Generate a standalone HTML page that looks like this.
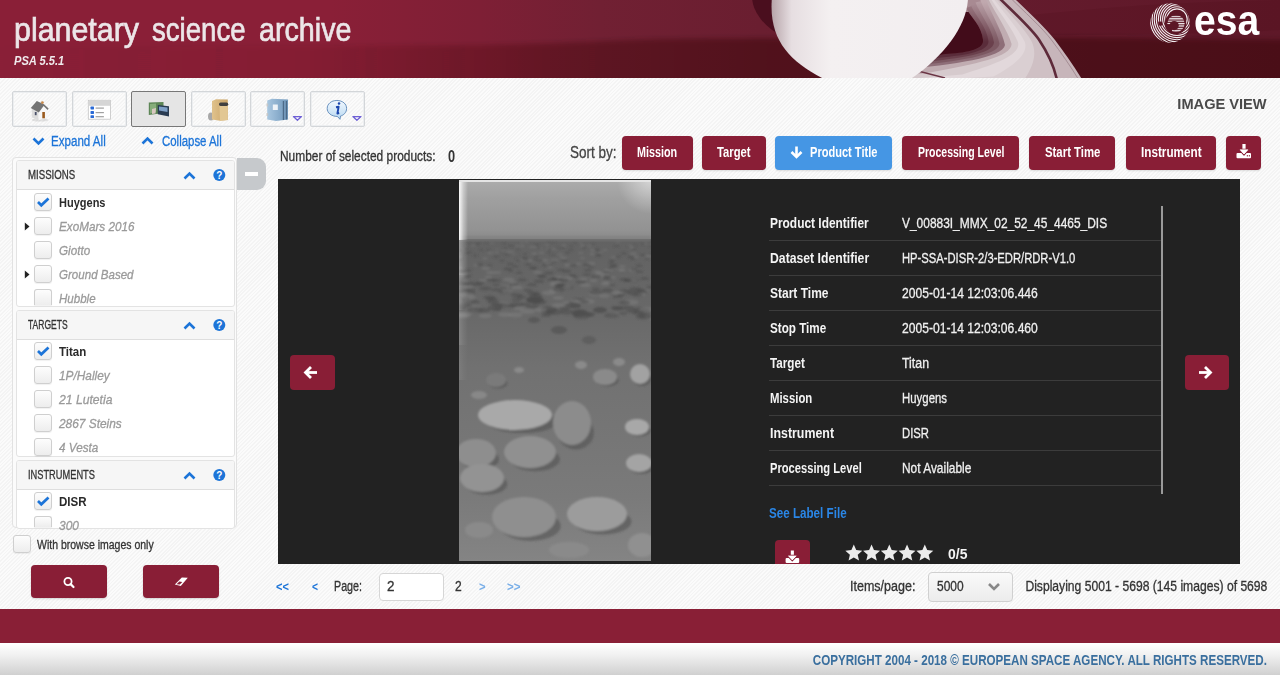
<!DOCTYPE html>
<html><head><meta charset="utf-8"><title>PSA</title><style>
html,body{margin:0;padding:0;}
body{width:1280px;height:675px;overflow:hidden;position:relative;font-family:"Liberation Sans",sans-serif;
 background:#f6f6f6 repeating-linear-gradient(135deg,#fbfbfb 0px,#fbfbfb 1.3px,#f4f4f4 1.3px,#f4f4f4 2.6px);}
.t{position:absolute;white-space:nowrap;line-height:normal;}
.t.n{-webkit-text-stroke:0.3px currentColor;}
.a{position:absolute;}
#hdr{position:absolute;left:0;top:0;width:1280px;height:78px;overflow:hidden;
 background:linear-gradient(90deg,#8a1f37 0px,#8a1f37 330px,#7e1f35 480px,#712033 600px,#6a1e30 760px,#641b2d 1000px,#5e1828 1280px);}
.tb{position:absolute;top:91px;width:53px;height:34px;border:1px solid #d3d6d9;border-radius:2px;box-shadow:inset 0 0 0 1px #eceef0;}
.tb.on{background:#e5e5e5;border-color:#777;box-shadow:none;}
.btn{position:absolute;top:136px;height:34px;background:#891e36;border-radius:4px;box-shadow:0 1px 2px rgba(0,0,0,.12);}
.btn.blue{background:#4596e4;}
.sec{position:absolute;left:16px;width:217px;background:#fff;border:1px solid #e3e3e3;border-radius:3px;overflow:hidden;}
.sech{position:absolute;left:0;top:0;width:217px;height:28px;background:#f6f6f6;border-bottom:1px solid #dedede;}
.cb{position:absolute;left:34px;width:16px;height:16px;border:1px solid #cfcfcf;border-radius:3px;background:linear-gradient(#fdfdfd,#ededed);box-shadow:0 1px 1px rgba(0,0,0,.06);}
.sep{position:absolute;left:769px;width:393px;height:1px;background:#3c3c3c;}

</style></head><body>
<div id="hdr">
<svg width="1280" height="78" style="position:absolute;left:0;top:0">
 <defs>
  <linearGradient id="land" x1="0" y1="0" x2="1" y2="0">
   <stop offset="0" stop-color="#3a000c" stop-opacity="0.0"/>
   <stop offset="0.25" stop-color="#3a000c" stop-opacity="0.08"/>
   <stop offset="0.42" stop-color="#3a000c" stop-opacity="0.3"/>
   <stop offset="0.6" stop-color="#300008" stop-opacity="0.42"/>
   <stop offset="1" stop-color="#2a0008" stop-opacity="0.42"/>
  </linearGradient>
  <linearGradient id="disc" x1="0" y1="0" x2="0.3" y2="1">
   <stop offset="0" stop-color="#f7f3f4"/>
   <stop offset="0.6" stop-color="#f1ebed"/>
   <stop offset="1" stop-color="#ddd0d4"/>
  </linearGradient>
  <linearGradient id="gap" x1="0" y1="0" x2="1" y2="1">
   <stop offset="0" stop-color="#5a1a2a"/>
   <stop offset="1" stop-color="#3e0c18"/>
  </linearGradient>
 </defs>
 <filter id="hblur" x="-5%" y="-50%" width="110%" height="200%"><feGaussianBlur stdDeviation="1.5 2.5"/></filter>
 <path d="M-20,47 C150,46 300,46 470,45 C560,44 620,40 660,39 C750,38 900,38 1000,37 C1100,37 1180,39 1300,40 L1300,90 L-20,90 Z" fill="url(#land)" filter="url(#hblur)"/>
 <path d="M1000,18 C1080,10 1150,2 1280,0 L1280,30 C1180,36 1080,34 1000,36 Z" fill="#3a000c" fill-opacity="0.10"/>
 <g id="rings"><ellipse cx="866" cy="-4" rx="114" ry="60" fill="#4a0e1e"/>
<path d="M930,-3 L966,-3 L966.0,8.0 C970.0,16.0 982.0,26.0 983.0,40.0 C984.0,50.0 965.0,53.0 945.0,54.0 L900,60 Z" fill="#420c1a"/>
<path d="M962,-3 L1000,-3 L990,12 L962,12 Z" fill="#a88a92"/>
<defs><linearGradient id="cg0" x1="0" y1="2" x2="0" y2="42" gradientUnits="userSpaceOnUse"><stop offset="0" stop-color="#a08088"/><stop offset="1" stop-color="#5a2c3a"/></linearGradient><linearGradient id="cg1" x1="0" y1="2" x2="0" y2="42" gradientUnits="userSpaceOnUse"><stop offset="0" stop-color="#ab8e96"/><stop offset="1" stop-color="#6a404c"/></linearGradient><linearGradient id="cg2" x1="0" y1="2" x2="0" y2="42" gradientUnits="userSpaceOnUse"><stop offset="0" stop-color="#b69ca3"/><stop offset="1" stop-color="#7c5862"/></linearGradient><linearGradient id="cg3" x1="0" y1="2" x2="0" y2="42" gradientUnits="userSpaceOnUse"><stop offset="0" stop-color="#c0a8ae"/><stop offset="1" stop-color="#8e6e78"/></linearGradient></defs>
<path d="M966.0,8.0 C970.0,16.0 982.0,26.0 983.0,40.0 C984.0,50.0 965.0,53.0 945.0,54.0 L860.0,70.0 L850.0,84.0 L1060.0,84.0 L1056.0,81.0 C1053.0,66.0 1046.0,52.0 1038.0,40.0 C1030.0,28.0 1011.0,11.0 997.0,-3.0 Z" fill="url(#cg0)"/>
<path d="M970.8,5.2 C975.0,15.0 987.0,27.0 988.5,41.2 C988.8,52.0 962.5,55.8 933.8,58.0 L860.0,70.0 L850.0,84.0 L1060.0,84.0 L1056.0,81.0 C1053.0,66.0 1046.0,52.0 1038.0,40.0 C1030.0,28.0 1011.0,11.0 997.0,-3.0 Z" fill="url(#cg1)"/>
<path d="M975.5,2.5 C980.0,14.0 992.0,28.0 994.0,42.5 C993.5,54.0 960.0,58.5 922.5,62.0 L860.0,70.0 L850.0,84.0 L1060.0,84.0 L1056.0,81.0 C1053.0,66.0 1046.0,52.0 1038.0,40.0 C1030.0,28.0 1011.0,11.0 997.0,-3.0 Z" fill="url(#cg2)"/>
<path d="M980.2,-0.2 C985.0,13.0 997.0,29.0 999.5,43.8 C998.2,56.0 957.5,61.2 911.2,66.0 L860.0,70.0 L850.0,84.0 L1060.0,84.0 L1056.0,81.0 C1053.0,66.0 1046.0,52.0 1038.0,40.0 C1030.0,28.0 1011.0,11.0 997.0,-3.0 Z" fill="url(#cg3)"/>
<path d="M985.0,-3.0 C990.0,12.0 1002.0,30.0 1005.0,45.0 C1003.0,58.0 955.0,64.0 900.0,70.0 L850.0,84.0 L1060.0,84.0 L1056.0,81.0 C1053.0,66.0 1046.0,52.0 1038.0,40.0 C1030.0,28.0 1011.0,11.0 997.0,-3.0 Z" fill="#c0acb1"/>
<path d="M987.4,-3.0 C994.2,11.8 1007.6,29.6 1011.6,44.0 C1011.6,56.8 974.6,64.4 931.2,72.2 L850.0,84.0 L1060.0,84.0 L1056.0,81.0 C1053.0,66.0 1046.0,52.0 1038.0,40.0 C1030.0,28.0 1011.0,11.0 997.0,-3.0 Z" fill="#d6cacd"/>
<path d="M989.8,-3.0 C998.4,11.6 1013.2,29.2 1018.2,43.0 C1020.2,55.6 994.2,64.8 962.4,74.4 L850.0,84.0 L1060.0,84.0 L1056.0,81.0 C1053.0,66.0 1046.0,52.0 1038.0,40.0 C1030.0,28.0 1011.0,11.0 997.0,-3.0 Z" fill="#e2d8db"/>
<path d="M992.2,-3.0 C1002.6,11.4 1018.8,28.8 1024.8,42.0 C1028.8,54.4 1013.8,65.2 993.6,76.6 L850.0,84.0 L1060.0,84.0 L1056.0,81.0 C1053.0,66.0 1046.0,52.0 1038.0,40.0 C1030.0,28.0 1011.0,11.0 997.0,-3.0 Z" fill="#dacfd2"/>
<path d="M994.6,-3.0 C1006.8,11.2 1024.4,28.4 1031.4,41.0 C1037.4,53.2 1033.4,65.6 1024.8,78.8 L850.0,84.0 L1060.0,84.0 L1056.0,81.0 C1053.0,66.0 1046.0,52.0 1038.0,40.0 C1030.0,28.0 1011.0,11.0 997.0,-3.0 Z" fill="#cfc0c4"/>
<path d="M997.0,-3.0 C1011.0,11.0 1030.0,28.0 1038.0,40.0 C1046.0,52.0 1053.0,66.0 1056.0,81.0  L1083.0,81.0 C1074.0,66.0 1064.0,52.0 1055.0,40.0 C1046.0,28.0 1027.0,11.0 1013.0,-3.0 Z" fill="#c7b5ba"/>
<path d="M998.2,-3.0 C1012.2,11.0 1031.2,28.0 1039.2,40.0 C1047.2,52.0 1054.2,66.0 1057.2,81.0" fill="none" stroke="#5e2a3a" stroke-width="2.6"/>
<path d="M1009.5,-3.0 C1023.5,11.0 1042.5,28.0 1051.5,40.0 C1060.5,52.0 1070.5,66.0 1079.5,81.0" fill="none" stroke="#a08890" stroke-width="0.9"/>
<path d="M918,71 L945,78" fill="none" stroke="#6a3444" stroke-width="1.4"/>
<defs><linearGradient id="disc2" x1="772" y1="0" x2="968" y2="0" gradientUnits="userSpaceOnUse"><stop offset="0" stop-color="#b8a6ab"/><stop offset="0.1" stop-color="#e6dee1"/><stop offset="0.3" stop-color="#f4f0f1"/><stop offset="1" stop-color="#f2eef0"/></linearGradient></defs>
<path d="M772,-3 C768,40 790,62 826,80 L909,80 C943,58 968,25 968,-3 Z" fill="url(#disc2)"/></g>
   <g id="esa" transform="translate(1170,23)"><defs><mask id="esamask"><rect x="-30" y="-30" width="60" height="60" fill="#000"/><circle cx="0" cy="0" r="19.8" fill="#fff"/><circle cx="5.5" cy="0.5" r="10.8" fill="#000"/></mask><mask id="emask"><rect x="-30" y="-30" width="60" height="60" fill="#000"/><circle cx="6" cy="0.5" r="8.6" fill="#fff"/><circle cx="4.2" cy="2.6" r="4.6" fill="#000"/><rect x="-6" y="1.2" width="8" height="12" fill="#000"/></mask><pattern id="esastr2" width="2.4" height="2.4" patternUnits="userSpaceOnUse"><rect x="0" y="0" width="2.4" height="1.25" fill="#f3eef0"/></pattern></defs>
<g mask="url(#esamask)" fill="none" stroke="#f3eef0" stroke-width="1.15">
<circle cx="7" cy="-4" r="10.20"/>
<circle cx="7" cy="-4" r="12.30"/>
<circle cx="7" cy="-4" r="14.40"/>
<circle cx="7" cy="-4" r="16.50"/>
<circle cx="7" cy="-4" r="18.60"/>
<circle cx="7" cy="-4" r="20.70"/>
<circle cx="7" cy="-4" r="22.80"/>
<circle cx="7" cy="-4" r="24.90"/>
<circle cx="7" cy="-4" r="27.00"/>
<circle cx="7" cy="-4" r="29.10"/>
</g>
<rect x="-4" y="-10" width="22" height="22" fill="url(#esastr2)" mask="url(#emask)"/>
<rect x="-11.8" y="-1.4" width="4" height="4" fill="#5e1526"/></g>
</svg>
</div>

<!-- toolbar -->
<div class="tb" style="left:12px"></div>
<div class="tb" style="left:72px"></div>
<div class="tb on" style="left:131px"></div>
<div class="tb" style="left:191px"></div>
<div class="tb" style="left:250px"></div>
<div class="tb" style="left:310px"></div>
<svg class="a" style="left:0;top:85px" width="380" height="45" id="icons"><g transform="translate(0,-85)">
<defs><linearGradient id="bubg" x1="0" y1="0" x2="0" y2="1"><stop offset="0" stop-color="#f2f8fe"/><stop offset="1" stop-color="#b9d9f2"/></linearGradient><linearGradient id="folg" x1="0" y1="0" x2="1" y2="0"><stop offset="0" stop-color="#e0c28c"/><stop offset="1" stop-color="#c9a468"/></linearGradient><linearGradient id="dbg" x1="0" y1="0" x2="1" y2="0"><stop offset="0" stop-color="#a9c7e0"/><stop offset="1" stop-color="#6f97bb"/></linearGradient></defs>
<ellipse cx="40" cy="120" rx="8.5" ry="1.6" fill="#000" fill-opacity="0.10"/>
<path d="M31.8,108.5 L38.6,111.5 L38.6,120.2 L31.8,117.2 Z" fill="#dcdcdc"/>
<path d="M38.6,111.5 L43.6,105.5 L47.6,109.5 L47.6,117.5 L38.6,120.2 Z" fill="#f7f7f7"/>
<path d="M30.8,108 L36.8,101 L44,104.2 L48.6,108.6 L47.6,110 L43.6,106 L38.8,112.4 Z" fill="#747474"/>
<circle cx="42.4" cy="102.6" r="1.4" fill="#c8894a"/>
<rect x="42.3" y="112" width="2.6" height="6.3" fill="#9a5a1e"/>
<rect x="34.8" y="112" width="1.8" height="3.2" fill="#4a5068"/>
<rect x="88.3" y="100.3" width="22.2" height="18.9" fill="#fff" stroke="#c4c4c4" stroke-width="0.8"/>
<rect x="88.7" y="100.7" width="21.4" height="5.1" fill="#d6d6d6"/>
<rect x="90.5" y="106.6" width="3.5" height="2.8" rx="0.6" fill="#2a6ad6"/>
<rect x="95.6" y="107.5" width="8.3" height="1.2" fill="#a0a0a0"/>
<rect x="90.5" y="111.1" width="3.5" height="2.8" rx="0.6" fill="#2a6ad6"/>
<rect x="95.6" y="112.0" width="8.3" height="1.2" fill="#a0a0a0"/>
<rect x="90.5" y="115.2" width="3.5" height="2.8" rx="0.6" fill="#2a6ad6"/>
<rect x="95.6" y="116.1" width="8.3" height="1.2" fill="#a0a0a0"/>
<path d="M148.8,102.5 L163.5,102 L163.5,113 L148.8,115 Z" fill="#5d8656"/>
<path d="M150,104 L156,103.5 L156,112 L150,113.5 Z" fill="#86ad7a"/>
<path d="M152,109 L156,108 L155.5,113.5 L152,114 Z" fill="#d8c8c0"/>
<path d="M157.8,105 L169,106.2 L169,116.5 L157.8,114.2 Z" fill="#2a3c52"/>
<path d="M159,106.5 L167.5,107.5 L167.5,112 L159,110.5 Z" fill="#7fa0c6"/>
<ellipse cx="211" cy="116.5" rx="3" ry="4" fill="#a8a8a8"/>
<path d="M212,101 L216,99.3 L227.8,99.5 L227.8,120 L220,120.7 L212,119.5 Z" fill="url(#folg)"/>
<path d="M219.5,106 L227.8,105.5 L227.8,120 L220,120.7 Z" fill="#e2c793"/>
<rect x="219" y="102.6" width="9.2" height="3.3" rx="1.6" fill="#404040"/>
<path d="M267.2,100.5 L272,98.7 L288,99.5 L288,119.5 L276,121.1 L267.2,119.5 Z" fill="url(#dbg)"/>
<rect x="272.8" y="104.5" width="5" height="5.5" fill="#eef3f8"/>
<rect x="282.8" y="101" width="1.3" height="19" fill="#4c6a88"/>
<rect x="285.8" y="101" width="1.3" height="18.5" fill="#4c6a88"/>
<rect x="266.5" y="103.5" width="1.6" height="3" fill="#c8c8c8"/><rect x="266.5" y="113" width="1.6" height="3" fill="#c8c8c8"/>
<path d="M293.4,116.6 L301.5,116.6 L297.4,120.2 Z" fill="none" stroke="#6e60d6" stroke-width="1.3" stroke-linejoin="round"/>
<path d="M352.9,116.6 L361.0,116.6 L356.9,120.2 Z" fill="none" stroke="#6e60d6" stroke-width="1.3" stroke-linejoin="round"/>
<path d="M336.9,100.5 C342.8,100.5 346.6,104 346.6,108.5 C346.6,112.5 343.5,115.3 340.5,116 L340,119.3 L337.5,116.5 C331,116.3 327.2,112.8 327.2,108.5 C327.2,104 331,100.5 336.9,100.5 Z" fill="url(#bubg)" stroke="#5b87b8" stroke-width="0.9"/>
<circle cx="339" cy="103.4" r="1.25" fill="#1b46ae"/>
<path d="M336,107.3 L338.6,106.8 L337.4,113.5 L339.2,113" fill="none" stroke="#1b46ae" stroke-width="1.9" stroke-linejoin="round"/>
</g></svg>

<!-- expand/collapse chevrons -->
<svg class="a" style="left:0;top:130px" width="260" height="20">
 <path d="M33.5,8.5 L38.5,13.5 L43.5,8.5" fill="none" stroke="#1c74d8" stroke-width="2.6"/>
 <path d="M142.5,13.5 L147.5,8.5 L152.5,13.5" fill="none" stroke="#1c74d8" stroke-width="2.6"/>
</svg>

<!-- panel -->
<div class="a" style="left:12px;top:157px;width:223px;height:369px;border:1px solid #e2e2e2;border-radius:4px;background:#fbfbfb;"></div>
<div class="a" style="left:237px;top:158px;width:29px;height:32px;background:#c6c9cc;border-radius:0 9px 9px 0;"></div>
<div class="a" style="left:245px;top:172px;width:13px;height:4px;background:#fff;"></div>
<div id="secs"><div class="sec" style="top:160.4px;height:145.1px">
<div class="sech"></div>
</div>
<svg class="a" style="left:180px;top:168.4px" width="50" height="20">
<path d="M4.5,10.5 L9.5,5.5 L14.5,10.5" fill="none" stroke="#1c74d8" stroke-width="2.6"/>
<circle cx="39.3" cy="7" r="6" fill="#1c74d8"/>
<text x="39.3" y="11.2" font-family="Liberation Sans" font-weight="bold" font-size="10" fill="#fff" text-anchor="middle">?</text>
</svg>
<div class="cb" style="top:193.2px"></div>
<svg class="a" style="left:34px;top:193.2px" width="18" height="18"><path d="M4,9 L7.3,12.3 L14.5,5.5" fill="none" stroke="#1c74d8" stroke-width="2.7"/></svg>
<div class="cb" style="top:217.2px"></div>
<svg class="a" style="left:24px;top:221.6px" width="8" height="12"><path d="M0.8,0.6 L5.5,4.6 L0.8,8.6 Z" fill="#222"/></svg>
<div class="cb" style="top:241.2px"></div>
<div class="cb" style="top:265.2px"></div>
<svg class="a" style="left:24px;top:269.6px" width="8" height="12"><path d="M0.8,0.6 L5.5,4.6 L0.8,8.6 Z" fill="#222"/></svg>
<div class="cb" style="top:289.2px;height:15.3px;border-bottom:none;border-radius:3px 3px 0 0"></div>
<div class="sec" style="top:309.5px;height:145.8px">
<div class="sech"></div>
</div>
<svg class="a" style="left:180px;top:317.5px" width="50" height="20">
<path d="M4.5,10.5 L9.5,5.5 L14.5,10.5" fill="none" stroke="#1c74d8" stroke-width="2.6"/>
<circle cx="39.3" cy="7" r="6" fill="#1c74d8"/>
<text x="39.3" y="11.2" font-family="Liberation Sans" font-weight="bold" font-size="10" fill="#fff" text-anchor="middle">?</text>
</svg>
<div class="cb" style="top:342.3px"></div>
<svg class="a" style="left:34px;top:342.3px" width="18" height="18"><path d="M4,9 L7.3,12.3 L14.5,5.5" fill="none" stroke="#1c74d8" stroke-width="2.7"/></svg>
<div class="cb" style="top:366.3px"></div>
<div class="cb" style="top:390.3px"></div>
<div class="cb" style="top:414.3px"></div>
<div class="cb" style="top:438.3px"></div>
<div class="sec" style="top:459.6px;height:67.4px">
<div class="sech"></div>
</div>
<svg class="a" style="left:180px;top:467.6px" width="50" height="20">
<path d="M4.5,10.5 L9.5,5.5 L14.5,10.5" fill="none" stroke="#1c74d8" stroke-width="2.6"/>
<circle cx="39.3" cy="7" r="6" fill="#1c74d8"/>
<text x="39.3" y="11.2" font-family="Liberation Sans" font-weight="bold" font-size="10" fill="#fff" text-anchor="middle">?</text>
</svg>
<div class="cb" style="top:492.4px"></div>
<svg class="a" style="left:34px;top:492.4px" width="18" height="18"><path d="M4,9 L7.3,12.3 L14.5,5.5" fill="none" stroke="#1c74d8" stroke-width="2.7"/></svg>
<div class="cb" style="top:516.4px;height:9.6px;border-bottom:none;border-radius:3px 3px 0 0"></div></div>

<!-- browse checkbox -->
<div class="cb" style="left:13px;top:535px;"></div>
<div class="a" style="left:31px;top:565px;width:76px;height:33px;background:#891e36;border-radius:4px;box-shadow:0 1px 2px rgba(0,0,0,.15)"></div>
<div class="a" style="left:143px;top:565px;width:76px;height:33px;background:#891e36;border-radius:4px;box-shadow:0 1px 2px rgba(0,0,0,.15)"></div>
<svg class="a" style="left:0;top:560px" width="240" height="45">
 <circle cx="68" cy="21.5" r="3.6" fill="none" stroke="#fff" stroke-width="1.8"/>
 <path d="M70.6,24.1 L73.5,27" stroke="#fff" stroke-width="2.2" stroke-linecap="round"/>
 <path d="M174.8,24.6 L181.8,17.4 L187.8,17.8 L180.8,25.9 Z" fill="#fff"/>
 <path d="M176.6,24.2 L179.3,21.6 L182.3,21.9 L179.8,24.6 Z" fill="#891e36"/>
</svg>

<!-- sort buttons -->
<div class="btn" style="left:621.5px;width:71px"></div>
<div class="btn" style="left:702px;width:63.6px"></div>
<div class="btn blue" style="left:775px;width:117.2px"></div>
<div class="btn" style="left:902px;width:117px"></div>
<div class="btn" style="left:1029.4px;width:86px"></div>
<div class="btn" style="left:1125.6px;width:90.7px"></div>
<div class="btn" style="left:1226.2px;width:35.2px"></div>
<svg class="a" style="left:780px;top:136px" width="490" height="34">
 <path d="M16.5,10.5 L16.5,21" stroke="#fff" stroke-width="2.6"/>
 <path d="M11.5,16 L16.5,21 L21.5,16" fill="none" stroke="#fff" stroke-width="2.6"/>
 <rect x="462.4" y="8" width="3.2" height="7" fill="#fff"/>
 <rect x="456.5" y="17" width="14.5" height="5.2" rx="1" fill="#fff"/>
 <path d="M458.6,13.2 L469.4,13.2 L464,19.2 Z" fill="#fff" stroke="#891e36" stroke-width="1.1" stroke-linejoin="round"/>
 <path d="M459.6,13.6 L468.4,13.6 L464,18.2 Z" fill="#fff"/>
 <rect x="466.8" y="19.2" width="1.2" height="1.2" fill="#891e36"/><rect x="468.8" y="19.2" width="1.2" height="1.2" fill="#891e36"/>
</svg>

<!-- dark container -->
<div class="a" style="left:278px;top:179px;width:962px;height:385px;background:#222;overflow:hidden">
 <svg class="a" style="left:181px;top:1px" width="192" height="381" id="titan"><defs>
<linearGradient id="sky" x1="0" y1="0" x2="0" y2="1"><stop offset="0" stop-color="#acacac"/><stop offset="0.3" stop-color="#a0a0a0"/><stop offset="0.85" stop-color="#929292"/><stop offset="1" stop-color="#868686"/></linearGradient>
<linearGradient id="gnd" x1="0" y1="0" x2="0" y2="1"><stop offset="0" stop-color="#626262"/><stop offset="0.22" stop-color="#686868"/><stop offset="0.4" stop-color="#717171"/><stop offset="0.8" stop-color="#7a7a7a"/><stop offset="1" stop-color="#848484"/></linearGradient>
<linearGradient id="lft" x1="0" y1="0" x2="1" y2="0"><stop offset="0" stop-color="#fff" stop-opacity="0.95"/><stop offset="0.5" stop-color="#fff" stop-opacity="0.4"/><stop offset="1" stop-color="#fff" stop-opacity="0"/></linearGradient>
<filter id="soft" x="-10%" y="-10%" width="120%" height="120%"><feGaussianBlur stdDeviation="0.9"/></filter>
</defs>
<rect x="0" y="0" width="192" height="60" fill="url(#sky)"/>
<rect x="0" y="59" width="192" height="322" fill="url(#gnd)"/>
<g filter="url(#soft)">
<ellipse cx="107.7" cy="91.0" rx="4.7" ry="1.6" fill="#4a4a4a" fill-opacity="0.50"/>
<ellipse cx="113.1" cy="95.3" rx="3.5" ry="1.2" fill="#4a4a4a" fill-opacity="0.50"/>
<ellipse cx="153.4" cy="105.1" rx="3.6" ry="1.2" fill="#4a4a4a" fill-opacity="0.50"/>
<ellipse cx="156.7" cy="66.2" rx="2.4" ry="0.8" fill="#4a4a4a" fill-opacity="0.50"/>
<ellipse cx="187.1" cy="135.4" rx="7.5" ry="2.6" fill="#4a4a4a" fill-opacity="0.50"/>
<ellipse cx="0.9" cy="70.2" rx="2.6" ry="0.9" fill="#4a4a4a" fill-opacity="0.50"/>
<ellipse cx="45.4" cy="72.2" rx="2.3" ry="0.8" fill="#4a4a4a" fill-opacity="0.50"/>
<ellipse cx="163.1" cy="90.0" rx="3.9" ry="1.3" fill="#858585" fill-opacity="0.40"/>
<ellipse cx="127.8" cy="94.6" rx="4.0" ry="1.4" fill="#4a4a4a" fill-opacity="0.50"/>
<ellipse cx="193.2" cy="136.8" rx="8.5" ry="2.9" fill="#858585" fill-opacity="0.40"/>
<ellipse cx="43.0" cy="80.8" rx="3.0" ry="1.0" fill="#4a4a4a" fill-opacity="0.50"/>
<ellipse cx="76.5" cy="116.5" rx="6.8" ry="2.3" fill="#4a4a4a" fill-opacity="0.50"/>
<ellipse cx="164.1" cy="133.2" rx="4.3" ry="1.5" fill="#4a4a4a" fill-opacity="0.50"/>
<ellipse cx="90.1" cy="129.0" rx="8.5" ry="2.9" fill="#4a4a4a" fill-opacity="0.50"/>
<ellipse cx="121.4" cy="65.2" rx="2.3" ry="0.8" fill="#4a4a4a" fill-opacity="0.50"/>
<ellipse cx="63.2" cy="66.0" rx="2.5" ry="0.9" fill="#858585" fill-opacity="0.40"/>
<ellipse cx="46.3" cy="67.8" rx="2.2" ry="0.8" fill="#4a4a4a" fill-opacity="0.50"/>
<ellipse cx="32.8" cy="119.1" rx="5.9" ry="2.0" fill="#4a4a4a" fill-opacity="0.50"/>
<ellipse cx="141.5" cy="72.3" rx="2.4" ry="0.8" fill="#858585" fill-opacity="0.40"/>
<ellipse cx="80.5" cy="67.7" rx="2.3" ry="0.8" fill="#4a4a4a" fill-opacity="0.50"/>
<ellipse cx="155.5" cy="134.4" rx="5.7" ry="2.0" fill="#858585" fill-opacity="0.40"/>
<ellipse cx="75.3" cy="73.6" rx="3.1" ry="1.1" fill="#858585" fill-opacity="0.40"/>
<ellipse cx="191.9" cy="66.8" rx="2.2" ry="0.8" fill="#4a4a4a" fill-opacity="0.50"/>
<ellipse cx="62.5" cy="117.0" rx="4.8" ry="1.7" fill="#4a4a4a" fill-opacity="0.50"/>
<ellipse cx="112.2" cy="66.2" rx="2.2" ry="0.8" fill="#4a4a4a" fill-opacity="0.50"/>
<ellipse cx="86.8" cy="84.9" rx="4.2" ry="1.5" fill="#4a4a4a" fill-opacity="0.50"/>
<ellipse cx="167.8" cy="100.6" rx="3.7" ry="1.3" fill="#4a4a4a" fill-opacity="0.50"/>
<ellipse cx="158.3" cy="128.8" rx="5.2" ry="1.8" fill="#4a4a4a" fill-opacity="0.50"/>
<ellipse cx="182.3" cy="114.2" rx="4.3" ry="1.5" fill="#858585" fill-opacity="0.40"/>
<ellipse cx="116.3" cy="126.5" rx="5.8" ry="2.0" fill="#4a4a4a" fill-opacity="0.50"/>
<ellipse cx="186.7" cy="63.5" rx="2.1" ry="0.7" fill="#858585" fill-opacity="0.40"/>
<ellipse cx="159.4" cy="76.7" rx="3.1" ry="1.1" fill="#4a4a4a" fill-opacity="0.50"/>
<ellipse cx="139.2" cy="71.3" rx="2.3" ry="0.8" fill="#4a4a4a" fill-opacity="0.50"/>
<ellipse cx="165.1" cy="99.4" rx="4.7" ry="1.6" fill="#4a4a4a" fill-opacity="0.50"/>
<ellipse cx="38.0" cy="129.6" rx="4.2" ry="1.5" fill="#4a4a4a" fill-opacity="0.50"/>
<ellipse cx="9.8" cy="90.4" rx="3.2" ry="1.1" fill="#4a4a4a" fill-opacity="0.50"/>
<ellipse cx="23.8" cy="100.4" rx="4.1" ry="1.4" fill="#858585" fill-opacity="0.40"/>
<ellipse cx="126.8" cy="135.2" rx="7.7" ry="2.6" fill="#4a4a4a" fill-opacity="0.50"/>
<ellipse cx="4.9" cy="69.1" rx="2.2" ry="0.8" fill="#858585" fill-opacity="0.40"/>
<ellipse cx="186.7" cy="111.0" rx="3.6" ry="1.2" fill="#858585" fill-opacity="0.40"/>
<ellipse cx="141.2" cy="93.3" rx="3.7" ry="1.3" fill="#858585" fill-opacity="0.40"/>
<ellipse cx="105.0" cy="65.4" rx="2.3" ry="0.8" fill="#858585" fill-opacity="0.40"/>
<ellipse cx="135.9" cy="114.0" rx="6.4" ry="2.2" fill="#858585" fill-opacity="0.40"/>
<ellipse cx="132.3" cy="83.4" rx="4.0" ry="1.4" fill="#858585" fill-opacity="0.40"/>
<ellipse cx="152.9" cy="88.3" rx="4.4" ry="1.5" fill="#4a4a4a" fill-opacity="0.50"/>
<ellipse cx="72.9" cy="104.7" rx="5.0" ry="1.7" fill="#4a4a4a" fill-opacity="0.50"/>
<ellipse cx="123.3" cy="65.6" rx="2.5" ry="0.8" fill="#858585" fill-opacity="0.40"/>
<ellipse cx="74.1" cy="113.3" rx="6.1" ry="2.1" fill="#4a4a4a" fill-opacity="0.50"/>
<ellipse cx="162.3" cy="90.0" rx="3.0" ry="1.0" fill="#858585" fill-opacity="0.40"/>
<ellipse cx="115.9" cy="63.1" rx="2.1" ry="0.7" fill="#4a4a4a" fill-opacity="0.50"/>
<ellipse cx="95.5" cy="110.7" rx="5.5" ry="1.9" fill="#858585" fill-opacity="0.40"/>
<ellipse cx="0.2" cy="76.6" rx="2.8" ry="1.0" fill="#858585" fill-opacity="0.40"/>
<ellipse cx="31.2" cy="73.0" rx="3.1" ry="1.1" fill="#858585" fill-opacity="0.40"/>
<ellipse cx="172.8" cy="90.2" rx="3.5" ry="1.2" fill="#858585" fill-opacity="0.40"/>
<ellipse cx="82.5" cy="72.8" rx="3.0" ry="1.0" fill="#858585" fill-opacity="0.40"/>
<ellipse cx="73.3" cy="126.4" rx="6.5" ry="2.2" fill="#4a4a4a" fill-opacity="0.50"/>
<ellipse cx="95.3" cy="68.9" rx="2.7" ry="0.9" fill="#858585" fill-opacity="0.40"/>
<ellipse cx="184.2" cy="111.8" rx="4.5" ry="1.5" fill="#4a4a4a" fill-opacity="0.50"/>
<ellipse cx="51.9" cy="90.8" rx="3.3" ry="1.1" fill="#4a4a4a" fill-opacity="0.50"/>
<ellipse cx="94.8" cy="104.7" rx="4.3" ry="1.5" fill="#858585" fill-opacity="0.40"/>
<ellipse cx="86.7" cy="135.4" rx="4.7" ry="1.6" fill="#4a4a4a" fill-opacity="0.50"/>
<ellipse cx="6.1" cy="125.7" rx="7.0" ry="2.4" fill="#4a4a4a" fill-opacity="0.50"/>
<ellipse cx="153.1" cy="80.3" rx="2.6" ry="0.9" fill="#4a4a4a" fill-opacity="0.50"/>
<ellipse cx="2.8" cy="91.1" rx="4.6" ry="1.6" fill="#4a4a4a" fill-opacity="0.50"/>
<ellipse cx="7.2" cy="69.1" rx="2.6" ry="0.9" fill="#4a4a4a" fill-opacity="0.50"/>
<ellipse cx="126.4" cy="105.1" rx="5.7" ry="2.0" fill="#858585" fill-opacity="0.40"/>
<ellipse cx="37.1" cy="109.6" rx="5.0" ry="1.7" fill="#4a4a4a" fill-opacity="0.50"/>
<ellipse cx="90.6" cy="62.3" rx="2.1" ry="0.7" fill="#4a4a4a" fill-opacity="0.50"/>
<ellipse cx="65.8" cy="77.7" rx="3.3" ry="1.1" fill="#4a4a4a" fill-opacity="0.50"/>
<ellipse cx="146.2" cy="103.8" rx="4.4" ry="1.5" fill="#858585" fill-opacity="0.40"/>
<ellipse cx="15.1" cy="128.6" rx="8.2" ry="2.8" fill="#858585" fill-opacity="0.40"/>
<ellipse cx="86.9" cy="68.5" rx="2.5" ry="0.9" fill="#858585" fill-opacity="0.40"/>
<ellipse cx="109.5" cy="85.2" rx="4.1" ry="1.4" fill="#858585" fill-opacity="0.40"/>
<ellipse cx="88.9" cy="132.0" rx="7.2" ry="2.5" fill="#4a4a4a" fill-opacity="0.50"/>
<ellipse cx="158.4" cy="112.7" rx="5.8" ry="2.0" fill="#858585" fill-opacity="0.40"/>
<ellipse cx="174.4" cy="73.7" rx="3.2" ry="1.1" fill="#858585" fill-opacity="0.40"/>
<ellipse cx="153.0" cy="97.6" rx="3.9" ry="1.3" fill="#858585" fill-opacity="0.40"/>
<ellipse cx="66.3" cy="124.2" rx="4.3" ry="1.5" fill="#4a4a4a" fill-opacity="0.50"/>
<ellipse cx="148.6" cy="98.6" rx="4.4" ry="1.5" fill="#4a4a4a" fill-opacity="0.50"/>
<ellipse cx="10.6" cy="120.2" rx="6.9" ry="2.4" fill="#4a4a4a" fill-opacity="0.50"/>
<ellipse cx="152.4" cy="82.2" rx="2.8" ry="1.0" fill="#4a4a4a" fill-opacity="0.50"/>
<ellipse cx="139.8" cy="95.9" rx="5.0" ry="1.7" fill="#858585" fill-opacity="0.40"/>
<ellipse cx="94.5" cy="132.1" rx="8.6" ry="3.0" fill="#4a4a4a" fill-opacity="0.50"/>
<ellipse cx="101.2" cy="74.3" rx="2.6" ry="0.9" fill="#858585" fill-opacity="0.40"/>
<ellipse cx="100.5" cy="105.8" rx="5.9" ry="2.0" fill="#4a4a4a" fill-opacity="0.50"/>
<ellipse cx="72.7" cy="80.5" rx="3.7" ry="1.3" fill="#858585" fill-opacity="0.40"/>
<ellipse cx="164.8" cy="73.4" rx="3.2" ry="1.1" fill="#4a4a4a" fill-opacity="0.50"/>
<ellipse cx="37.4" cy="100.4" rx="4.6" ry="1.6" fill="#4a4a4a" fill-opacity="0.50"/>
<ellipse cx="3.4" cy="103.1" rx="6.0" ry="2.1" fill="#4a4a4a" fill-opacity="0.50"/>
<ellipse cx="155.0" cy="87.0" rx="3.8" ry="1.3" fill="#4a4a4a" fill-opacity="0.50"/>
<ellipse cx="10.9" cy="110.1" rx="5.3" ry="1.8" fill="#4a4a4a" fill-opacity="0.50"/>
<ellipse cx="179.0" cy="133.1" rx="5.5" ry="1.9" fill="#4a4a4a" fill-opacity="0.50"/>
<ellipse cx="83.0" cy="68.3" rx="2.6" ry="0.9" fill="#858585" fill-opacity="0.40"/>
<ellipse cx="60.2" cy="92.8" rx="3.4" ry="1.2" fill="#4a4a4a" fill-opacity="0.50"/>
<ellipse cx="23.4" cy="130.3" rx="7.7" ry="2.6" fill="#4a4a4a" fill-opacity="0.50"/>
<ellipse cx="42.5" cy="72.5" rx="2.9" ry="1.0" fill="#4a4a4a" fill-opacity="0.50"/>
<ellipse cx="119.5" cy="83.7" rx="2.8" ry="1.0" fill="#858585" fill-opacity="0.40"/>
<ellipse cx="98.1" cy="68.1" rx="2.3" ry="0.8" fill="#4a4a4a" fill-opacity="0.50"/>
<ellipse cx="83.6" cy="97.0" rx="4.0" ry="1.4" fill="#4a4a4a" fill-opacity="0.50"/>
<ellipse cx="29.3" cy="97.0" rx="3.6" ry="1.2" fill="#858585" fill-opacity="0.40"/>
<ellipse cx="101.8" cy="105.8" rx="5.9" ry="2.0" fill="#4a4a4a" fill-opacity="0.50"/>
<ellipse cx="43.6" cy="124.3" rx="7.0" ry="2.4" fill="#858585" fill-opacity="0.40"/>
<ellipse cx="59.9" cy="128.3" rx="5.5" ry="1.9" fill="#858585" fill-opacity="0.40"/>
<ellipse cx="193.7" cy="74.1" rx="3.2" ry="1.1" fill="#4a4a4a" fill-opacity="0.50"/>
<ellipse cx="140.4" cy="75.5" rx="2.7" ry="0.9" fill="#4a4a4a" fill-opacity="0.50"/>
<ellipse cx="80.6" cy="122.2" rx="7.1" ry="2.4" fill="#4a4a4a" fill-opacity="0.50"/>
<ellipse cx="132.3" cy="87.2" rx="2.8" ry="1.0" fill="#4a4a4a" fill-opacity="0.50"/>
<ellipse cx="176.6" cy="109.4" rx="6.6" ry="2.3" fill="#4a4a4a" fill-opacity="0.50"/>
<ellipse cx="146.6" cy="95.1" rx="4.2" ry="1.4" fill="#858585" fill-opacity="0.40"/>
<ellipse cx="11.8" cy="72.2" rx="2.4" ry="0.8" fill="#4a4a4a" fill-opacity="0.50"/>
<ellipse cx="98.9" cy="98.7" rx="4.6" ry="1.6" fill="#4a4a4a" fill-opacity="0.50"/>
<ellipse cx="38.0" cy="71.9" rx="2.9" ry="1.0" fill="#858585" fill-opacity="0.40"/>
<ellipse cx="16.7" cy="130.5" rx="4.5" ry="1.5" fill="#858585" fill-opacity="0.40"/>
<ellipse cx="147.9" cy="91.7" rx="3.6" ry="1.2" fill="#4a4a4a" fill-opacity="0.50"/>
<ellipse cx="82.3" cy="95.8" rx="4.4" ry="1.5" fill="#4a4a4a" fill-opacity="0.50"/>
<ellipse cx="163.5" cy="111.0" rx="4.1" ry="1.4" fill="#4a4a4a" fill-opacity="0.50"/>
<ellipse cx="77.4" cy="114.2" rx="4.3" ry="1.5" fill="#4a4a4a" fill-opacity="0.50"/>
<ellipse cx="1.0" cy="95.6" rx="5.1" ry="1.8" fill="#858585" fill-opacity="0.40"/>
<ellipse cx="166.7" cy="111.3" rx="5.6" ry="1.9" fill="#4a4a4a" fill-opacity="0.50"/>
<ellipse cx="96.8" cy="102.6" rx="6.0" ry="2.0" fill="#858585" fill-opacity="0.40"/>
<ellipse cx="176.6" cy="76.8" rx="3.3" ry="1.1" fill="#858585" fill-opacity="0.40"/>
<ellipse cx="77.5" cy="120.6" rx="7.3" ry="2.5" fill="#858585" fill-opacity="0.40"/>
<ellipse cx="148.4" cy="110.4" rx="6.0" ry="2.1" fill="#4a4a4a" fill-opacity="0.50"/>
<ellipse cx="11.8" cy="112.8" rx="4.8" ry="1.6" fill="#4a4a4a" fill-opacity="0.50"/>
<ellipse cx="67.7" cy="62.3" rx="2.1" ry="0.7" fill="#858585" fill-opacity="0.40"/>
<ellipse cx="183.2" cy="75.0" rx="3.0" ry="1.0" fill="#4a4a4a" fill-opacity="0.50"/>
<ellipse cx="109.6" cy="107.5" rx="5.1" ry="1.7" fill="#4a4a4a" fill-opacity="0.50"/>
<ellipse cx="123.9" cy="137.0" rx="7.8" ry="2.7" fill="#858585" fill-opacity="0.40"/>
<ellipse cx="2.5" cy="135.2" rx="7.3" ry="2.5" fill="#858585" fill-opacity="0.40"/>
<ellipse cx="76.7" cy="76.7" rx="2.5" ry="0.9" fill="#4a4a4a" fill-opacity="0.50"/>
<ellipse cx="17.3" cy="85.2" rx="3.1" ry="1.1" fill="#858585" fill-opacity="0.40"/>
<ellipse cx="97.5" cy="98.6" rx="5.5" ry="1.9" fill="#4a4a4a" fill-opacity="0.50"/>
<ellipse cx="123.1" cy="136.6" rx="8.3" ry="2.9" fill="#4a4a4a" fill-opacity="0.50"/>
<ellipse cx="146.8" cy="102.4" rx="3.4" ry="1.2" fill="#858585" fill-opacity="0.40"/>
<ellipse cx="90.5" cy="70.3" rx="2.4" ry="0.8" fill="#4a4a4a" fill-opacity="0.50"/>
<ellipse cx="9.5" cy="103.5" rx="5.9" ry="2.0" fill="#4a4a4a" fill-opacity="0.50"/>
<ellipse cx="115.2" cy="96.8" rx="4.0" ry="1.4" fill="#4a4a4a" fill-opacity="0.50"/>
<ellipse cx="107.9" cy="107.1" rx="4.3" ry="1.5" fill="#858585" fill-opacity="0.40"/>
<ellipse cx="0.7" cy="79.4" rx="2.8" ry="1.0" fill="#4a4a4a" fill-opacity="0.50"/>
<ellipse cx="145.9" cy="70.1" rx="2.5" ry="0.9" fill="#858585" fill-opacity="0.40"/>
<ellipse cx="7.8" cy="115.0" rx="7.2" ry="2.5" fill="#858585" fill-opacity="0.40"/>
<ellipse cx="175.5" cy="65.3" rx="2.2" ry="0.8" fill="#4a4a4a" fill-opacity="0.50"/>
<ellipse cx="45.8" cy="134.6" rx="6.8" ry="2.3" fill="#858585" fill-opacity="0.40"/>
<ellipse cx="89.8" cy="112.8" rx="6.9" ry="2.4" fill="#858585" fill-opacity="0.40"/>
<ellipse cx="20.6" cy="102.9" rx="5.0" ry="1.7" fill="#4a4a4a" fill-opacity="0.50"/>
<ellipse cx="8.2" cy="73.1" rx="2.8" ry="1.0" fill="#4a4a4a" fill-opacity="0.50"/>
<ellipse cx="128.9" cy="90.2" rx="3.8" ry="1.3" fill="#4a4a4a" fill-opacity="0.50"/>
<ellipse cx="80.2" cy="101.2" rx="5.3" ry="1.8" fill="#4a4a4a" fill-opacity="0.50"/>
<ellipse cx="184.7" cy="136.8" rx="8.0" ry="2.7" fill="#4a4a4a" fill-opacity="0.50"/>
<ellipse cx="173.0" cy="67.5" rx="2.5" ry="0.9" fill="#858585" fill-opacity="0.40"/>
<ellipse cx="51.2" cy="84.0" rx="3.7" ry="1.3" fill="#4a4a4a" fill-opacity="0.50"/>
<ellipse cx="122.1" cy="102.0" rx="5.3" ry="1.8" fill="#4a4a4a" fill-opacity="0.50"/>
<ellipse cx="190.0" cy="76.1" rx="3.4" ry="1.2" fill="#858585" fill-opacity="0.40"/>
<ellipse cx="9.9" cy="63.6" rx="2.1" ry="0.7" fill="#4a4a4a" fill-opacity="0.50"/>
<ellipse cx="18.1" cy="104.5" rx="4.9" ry="1.7" fill="#4a4a4a" fill-opacity="0.50"/>
<ellipse cx="130.6" cy="66.0" rx="2.3" ry="0.8" fill="#858585" fill-opacity="0.40"/>
<ellipse cx="91.8" cy="85.0" rx="3.1" ry="1.1" fill="#4a4a4a" fill-opacity="0.50"/>
<ellipse cx="162.4" cy="114.7" rx="3.9" ry="1.4" fill="#4a4a4a" fill-opacity="0.50"/>
<ellipse cx="120.3" cy="120.2" rx="6.8" ry="2.3" fill="#4a4a4a" fill-opacity="0.50"/>
<ellipse cx="48.6" cy="88.8" rx="4.3" ry="1.5" fill="#4a4a4a" fill-opacity="0.50"/>
<ellipse cx="191.9" cy="107.0" rx="4.4" ry="1.5" fill="#4a4a4a" fill-opacity="0.50"/>
<ellipse cx="178.5" cy="114.8" rx="5.2" ry="1.8" fill="#4a4a4a" fill-opacity="0.50"/>
<ellipse cx="169.5" cy="66.6" rx="2.2" ry="0.7" fill="#4a4a4a" fill-opacity="0.50"/>
<ellipse cx="93.0" cy="99.7" rx="4.9" ry="1.7" fill="#4a4a4a" fill-opacity="0.50"/>
<ellipse cx="12.9" cy="117.3" rx="4.5" ry="1.6" fill="#858585" fill-opacity="0.40"/>
<ellipse cx="57.5" cy="65.7" rx="2.4" ry="0.8" fill="#858585" fill-opacity="0.40"/>
<ellipse cx="26.0" cy="78.5" rx="2.9" ry="1.0" fill="#858585" fill-opacity="0.40"/>
<ellipse cx="21.0" cy="84.5" rx="3.8" ry="1.3" fill="#4a4a4a" fill-opacity="0.50"/>
<ellipse cx="182.2" cy="129.7" rx="8.2" ry="2.8" fill="#4a4a4a" fill-opacity="0.50"/>
<ellipse cx="57.7" cy="119.6" rx="5.0" ry="1.7" fill="#4a4a4a" fill-opacity="0.50"/>
<ellipse cx="173.4" cy="131.2" rx="5.3" ry="1.8" fill="#4a4a4a" fill-opacity="0.50"/>
<ellipse cx="69.2" cy="84.4" rx="3.3" ry="1.1" fill="#4a4a4a" fill-opacity="0.50"/>
<ellipse cx="108.5" cy="72.5" rx="3.0" ry="1.0" fill="#4a4a4a" fill-opacity="0.50"/>
<ellipse cx="108.3" cy="122.5" rx="4.6" ry="1.6" fill="#858585" fill-opacity="0.40"/>
<ellipse cx="53.2" cy="126.4" rx="4.1" ry="1.4" fill="#4a4a4a" fill-opacity="0.50"/>
<ellipse cx="109.2" cy="98.1" rx="5.5" ry="1.9" fill="#858585" fill-opacity="0.40"/>
<ellipse cx="10.6" cy="119.8" rx="5.9" ry="2.0" fill="#858585" fill-opacity="0.40"/>
<ellipse cx="14.0" cy="65.8" rx="2.4" ry="0.8" fill="#858585" fill-opacity="0.40"/>
<ellipse cx="122.3" cy="65.9" rx="2.2" ry="0.7" fill="#858585" fill-opacity="0.40"/>
<ellipse cx="46.1" cy="106.6" rx="4.1" ry="1.4" fill="#858585" fill-opacity="0.40"/>
<ellipse cx="147.9" cy="96.3" rx="4.0" ry="1.4" fill="#4a4a4a" fill-opacity="0.50"/>
<ellipse cx="129.8" cy="134.2" rx="6.6" ry="2.3" fill="#4a4a4a" fill-opacity="0.50"/>
<ellipse cx="136.8" cy="112.6" rx="6.7" ry="2.3" fill="#4a4a4a" fill-opacity="0.50"/>
<ellipse cx="128.7" cy="121.6" rx="7.3" ry="2.5" fill="#858585" fill-opacity="0.40"/>
<ellipse cx="172.2" cy="122.3" rx="7.7" ry="2.7" fill="#858585" fill-opacity="0.40"/>
<ellipse cx="137.2" cy="96.5" rx="5.0" ry="1.7" fill="#4a4a4a" fill-opacity="0.50"/>
<ellipse cx="26.7" cy="88.5" rx="4.2" ry="1.4" fill="#858585" fill-opacity="0.40"/>
<ellipse cx="30.9" cy="85.2" rx="3.1" ry="1.0" fill="#4a4a4a" fill-opacity="0.50"/>
<ellipse cx="188.1" cy="79.1" rx="2.6" ry="0.9" fill="#4a4a4a" fill-opacity="0.50"/>
<ellipse cx="125.0" cy="67.6" rx="2.5" ry="0.9" fill="#4a4a4a" fill-opacity="0.50"/>
<ellipse cx="87.9" cy="64.7" rx="2.2" ry="0.8" fill="#858585" fill-opacity="0.40"/>
<ellipse cx="19.3" cy="63.4" rx="2.1" ry="0.7" fill="#4a4a4a" fill-opacity="0.50"/>
<ellipse cx="138.6" cy="75.2" rx="3.0" ry="1.0" fill="#4a4a4a" fill-opacity="0.50"/>
<ellipse cx="53.1" cy="71.9" rx="2.4" ry="0.8" fill="#858585" fill-opacity="0.40"/>
<ellipse cx="105.5" cy="80.5" rx="3.6" ry="1.3" fill="#4a4a4a" fill-opacity="0.50"/>
<ellipse cx="171.9" cy="76.9" rx="3.5" ry="1.2" fill="#4a4a4a" fill-opacity="0.50"/>
<ellipse cx="185.6" cy="98.4" rx="4.3" ry="1.5" fill="#4a4a4a" fill-opacity="0.50"/>
<ellipse cx="183.7" cy="64.0" rx="2.3" ry="0.8" fill="#4a4a4a" fill-opacity="0.50"/>
<ellipse cx="99.1" cy="96.8" rx="3.7" ry="1.3" fill="#858585" fill-opacity="0.40"/>
<ellipse cx="44.6" cy="107.4" rx="3.5" ry="1.2" fill="#4a4a4a" fill-opacity="0.50"/>
<ellipse cx="154.2" cy="84.9" rx="3.9" ry="1.3" fill="#4a4a4a" fill-opacity="0.50"/>
<ellipse cx="28.8" cy="70.1" rx="2.5" ry="0.8" fill="#4a4a4a" fill-opacity="0.50"/>
<ellipse cx="99.2" cy="125.4" rx="6.7" ry="2.3" fill="#858585" fill-opacity="0.40"/>
<ellipse cx="102.8" cy="77.3" rx="2.6" ry="0.9" fill="#858585" fill-opacity="0.40"/>
<ellipse cx="159.0" cy="62.0" rx="2.1" ry="0.7" fill="#858585" fill-opacity="0.40"/>
<ellipse cx="50.9" cy="65.8" rx="2.4" ry="0.8" fill="#4a4a4a" fill-opacity="0.50"/>
<ellipse cx="89.9" cy="93.1" rx="5.0" ry="1.7" fill="#4a4a4a" fill-opacity="0.50"/>
<ellipse cx="57.5" cy="124.4" rx="7.2" ry="2.5" fill="#4a4a4a" fill-opacity="0.50"/>
<ellipse cx="15.8" cy="129.6" rx="7.8" ry="2.7" fill="#4a4a4a" fill-opacity="0.50"/>
<ellipse cx="101.0" cy="98.1" rx="3.5" ry="1.2" fill="#858585" fill-opacity="0.40"/>
<ellipse cx="58.9" cy="80.5" rx="2.7" ry="0.9" fill="#4a4a4a" fill-opacity="0.50"/>
<ellipse cx="138.2" cy="92.1" rx="3.7" ry="1.3" fill="#858585" fill-opacity="0.40"/>
<ellipse cx="75.3" cy="67.1" rx="2.4" ry="0.8" fill="#858585" fill-opacity="0.40"/>
<ellipse cx="126.2" cy="122.0" rx="4.0" ry="1.4" fill="#4a4a4a" fill-opacity="0.50"/>
<ellipse cx="44.5" cy="111.7" rx="5.4" ry="1.9" fill="#4a4a4a" fill-opacity="0.50"/>
<ellipse cx="192.4" cy="62.3" rx="2.1" ry="0.7" fill="#4a4a4a" fill-opacity="0.50"/>
<ellipse cx="54.9" cy="103.9" rx="4.4" ry="1.5" fill="#4a4a4a" fill-opacity="0.50"/>
<ellipse cx="64.1" cy="79.6" rx="3.0" ry="1.0" fill="#858585" fill-opacity="0.40"/>
<ellipse cx="37.2" cy="76.7" rx="3.2" ry="1.1" fill="#4a4a4a" fill-opacity="0.50"/>
<ellipse cx="108.3" cy="132.1" rx="7.6" ry="2.6" fill="#4a4a4a" fill-opacity="0.50"/>
<ellipse cx="16.1" cy="121.7" rx="4.5" ry="1.5" fill="#4a4a4a" fill-opacity="0.50"/>
<ellipse cx="136.8" cy="109.0" rx="4.1" ry="1.4" fill="#4a4a4a" fill-opacity="0.50"/>
<ellipse cx="114.2" cy="122.6" rx="4.3" ry="1.5" fill="#4a4a4a" fill-opacity="0.50"/>
<ellipse cx="22.3" cy="70.1" rx="2.5" ry="0.9" fill="#4a4a4a" fill-opacity="0.50"/>
<ellipse cx="81.7" cy="129.9" rx="6.4" ry="2.2" fill="#858585" fill-opacity="0.40"/>
<ellipse cx="158.9" cy="116.5" rx="5.1" ry="1.8" fill="#4a4a4a" fill-opacity="0.50"/>
<ellipse cx="1.0" cy="87.9" rx="3.5" ry="1.2" fill="#858585" fill-opacity="0.40"/>
<ellipse cx="152.8" cy="135.4" rx="7.5" ry="2.6" fill="#4a4a4a" fill-opacity="0.50"/>
<ellipse cx="62.9" cy="62.6" rx="2.1" ry="0.7" fill="#858585" fill-opacity="0.40"/>
<ellipse cx="72.0" cy="67.1" rx="2.4" ry="0.8" fill="#858585" fill-opacity="0.40"/>
<ellipse cx="117.8" cy="121.6" rx="4.5" ry="1.6" fill="#858585" fill-opacity="0.40"/>
<ellipse cx="105.5" cy="128.4" rx="5.6" ry="1.9" fill="#4a4a4a" fill-opacity="0.50"/>
<ellipse cx="137.8" cy="69.2" rx="2.8" ry="1.0" fill="#4a4a4a" fill-opacity="0.50"/>
<ellipse cx="161.8" cy="112.2" rx="4.2" ry="1.5" fill="#858585" fill-opacity="0.40"/>
<ellipse cx="36.8" cy="104.8" rx="3.6" ry="1.2" fill="#4a4a4a" fill-opacity="0.50"/>
<ellipse cx="134.6" cy="100.7" rx="4.1" ry="1.4" fill="#858585" fill-opacity="0.40"/>
<ellipse cx="88.8" cy="84.1" rx="2.9" ry="1.0" fill="#858585" fill-opacity="0.40"/>
<ellipse cx="175.2" cy="68.8" rx="2.5" ry="0.9" fill="#4a4a4a" fill-opacity="0.50"/>
<ellipse cx="49.8" cy="99.4" rx="5.5" ry="1.9" fill="#858585" fill-opacity="0.40"/>
<ellipse cx="115.9" cy="120.9" rx="4.3" ry="1.5" fill="#858585" fill-opacity="0.40"/>
<ellipse cx="173.8" cy="78.9" rx="2.8" ry="1.0" fill="#4a4a4a" fill-opacity="0.50"/>
<ellipse cx="34.4" cy="122.0" rx="6.1" ry="2.1" fill="#4a4a4a" fill-opacity="0.50"/>
<ellipse cx="33.3" cy="63.2" rx="2.2" ry="0.8" fill="#858585" fill-opacity="0.40"/>
<ellipse cx="58.3" cy="107.4" rx="5.5" ry="1.9" fill="#858585" fill-opacity="0.40"/>
<ellipse cx="114.0" cy="85.6" rx="4.1" ry="1.4" fill="#4a4a4a" fill-opacity="0.50"/>
<ellipse cx="89.7" cy="72.8" rx="2.4" ry="0.8" fill="#4a4a4a" fill-opacity="0.50"/>
<ellipse cx="32.0" cy="100.2" rx="4.5" ry="1.6" fill="#4a4a4a" fill-opacity="0.50"/>
<ellipse cx="63.1" cy="100.0" rx="4.8" ry="1.7" fill="#4a4a4a" fill-opacity="0.50"/>
<ellipse cx="26.4" cy="108.5" rx="6.4" ry="2.2" fill="#4a4a4a" fill-opacity="0.50"/>
<ellipse cx="78.6" cy="92.3" rx="4.2" ry="1.5" fill="#858585" fill-opacity="0.40"/>
<ellipse cx="145.3" cy="115.8" rx="5.4" ry="1.9" fill="#858585" fill-opacity="0.40"/>
<ellipse cx="165.6" cy="122.7" rx="5.6" ry="1.9" fill="#4a4a4a" fill-opacity="0.50"/>
<ellipse cx="175.4" cy="99.9" rx="4.5" ry="1.6" fill="#4a4a4a" fill-opacity="0.50"/>
<ellipse cx="175.2" cy="89.4" rx="3.5" ry="1.2" fill="#4a4a4a" fill-opacity="0.50"/>
<ellipse cx="174.4" cy="113.0" rx="6.1" ry="2.1" fill="#4a4a4a" fill-opacity="0.50"/>
<ellipse cx="57.7" cy="115.3" rx="5.8" ry="2.0" fill="#4a4a4a" fill-opacity="0.50"/>
<ellipse cx="85.6" cy="68.2" rx="2.4" ry="0.8" fill="#4a4a4a" fill-opacity="0.50"/>
<ellipse cx="134.2" cy="64.2" rx="2.2" ry="0.8" fill="#4a4a4a" fill-opacity="0.50"/>
<ellipse cx="75.5" cy="80.1" rx="2.9" ry="1.0" fill="#4a4a4a" fill-opacity="0.50"/>
<ellipse cx="187.4" cy="129.1" rx="7.1" ry="2.4" fill="#858585" fill-opacity="0.40"/>
<ellipse cx="155.8" cy="88.6" rx="3.2" ry="1.1" fill="#858585" fill-opacity="0.40"/>
<ellipse cx="175.1" cy="99.9" rx="3.5" ry="1.2" fill="#858585" fill-opacity="0.40"/>
<ellipse cx="103.4" cy="68.1" rx="2.7" ry="0.9" fill="#4a4a4a" fill-opacity="0.50"/>
<ellipse cx="56.7" cy="75.8" rx="2.8" ry="0.9" fill="#4a4a4a" fill-opacity="0.50"/>
<ellipse cx="157.8" cy="127.7" rx="5.8" ry="2.0" fill="#4a4a4a" fill-opacity="0.50"/>
<ellipse cx="7.0" cy="101.5" rx="3.3" ry="1.1" fill="#858585" fill-opacity="0.40"/>
<ellipse cx="95.7" cy="80.2" rx="3.8" ry="1.3" fill="#858585" fill-opacity="0.40"/>
<ellipse cx="38.5" cy="92.5" rx="3.6" ry="1.2" fill="#858585" fill-opacity="0.40"/>
<ellipse cx="36.3" cy="127.8" rx="7.7" ry="2.7" fill="#4a4a4a" fill-opacity="0.50"/>
<ellipse cx="31.7" cy="92.5" rx="4.8" ry="1.6" fill="#858585" fill-opacity="0.40"/>
<ellipse cx="121.9" cy="73.0" rx="2.5" ry="0.9" fill="#858585" fill-opacity="0.40"/>
<ellipse cx="18.8" cy="64.1" rx="2.2" ry="0.8" fill="#4a4a4a" fill-opacity="0.50"/>
<ellipse cx="168.4" cy="128.1" rx="7.2" ry="2.5" fill="#4a4a4a" fill-opacity="0.50"/>
<ellipse cx="181.8" cy="110.5" rx="5.0" ry="1.7" fill="#4a4a4a" fill-opacity="0.50"/>
<ellipse cx="58.2" cy="74.4" rx="3.0" ry="1.0" fill="#4a4a4a" fill-opacity="0.50"/>
<ellipse cx="44.1" cy="71.6" rx="2.8" ry="1.0" fill="#858585" fill-opacity="0.40"/>
<ellipse cx="127.8" cy="84.9" rx="4.1" ry="1.4" fill="#4a4a4a" fill-opacity="0.50"/>
<ellipse cx="57.0" cy="74.8" rx="3.3" ry="1.1" fill="#858585" fill-opacity="0.40"/>
<ellipse cx="123.4" cy="78.1" rx="2.6" ry="0.9" fill="#858585" fill-opacity="0.40"/>
<ellipse cx="101.5" cy="90.0" rx="3.9" ry="1.3" fill="#4a4a4a" fill-opacity="0.50"/>
<ellipse cx="53.8" cy="102.6" rx="4.0" ry="1.4" fill="#858585" fill-opacity="0.40"/>
<ellipse cx="53.9" cy="66.0" rx="2.4" ry="0.8" fill="#4a4a4a" fill-opacity="0.50"/>
<ellipse cx="105.4" cy="78.2" rx="2.7" ry="0.9" fill="#858585" fill-opacity="0.40"/>
<ellipse cx="4.6" cy="135.9" rx="6.6" ry="2.3" fill="#858585" fill-opacity="0.40"/>
<ellipse cx="180.1" cy="85.8" rx="3.6" ry="1.2" fill="#4a4a4a" fill-opacity="0.50"/>
<ellipse cx="124.4" cy="99.1" rx="4.1" ry="1.4" fill="#858585" fill-opacity="0.40"/>
<ellipse cx="99.3" cy="117.9" rx="5.6" ry="1.9" fill="#858585" fill-opacity="0.40"/>
<ellipse cx="100.0" cy="109.6" rx="6.5" ry="2.2" fill="#4a4a4a" fill-opacity="0.50"/>
<ellipse cx="30.4" cy="117.6" rx="6.0" ry="2.1" fill="#4a4a4a" fill-opacity="0.50"/>
<ellipse cx="149.5" cy="90.0" rx="4.4" ry="1.5" fill="#858585" fill-opacity="0.40"/>
<ellipse cx="93.9" cy="75.3" rx="2.6" ry="0.9" fill="#4a4a4a" fill-opacity="0.50"/>
<ellipse cx="4.9" cy="94.6" rx="4.3" ry="1.5" fill="#858585" fill-opacity="0.40"/>
<ellipse cx="169.1" cy="100.4" rx="3.7" ry="1.3" fill="#4a4a4a" fill-opacity="0.50"/>
<ellipse cx="95.2" cy="62.6" rx="2.1" ry="0.7" fill="#4a4a4a" fill-opacity="0.50"/>
<ellipse cx="154.5" cy="77.1" rx="2.5" ry="0.9" fill="#858585" fill-opacity="0.40"/>
<ellipse cx="104.5" cy="100.1" rx="5.2" ry="1.8" fill="#4a4a4a" fill-opacity="0.50"/>
<ellipse cx="59.0" cy="69.5" rx="2.2" ry="0.8" fill="#4a4a4a" fill-opacity="0.50"/>
<ellipse cx="101.0" cy="104.4" rx="4.1" ry="1.4" fill="#4a4a4a" fill-opacity="0.50"/>
<ellipse cx="158.8" cy="66.1" rx="2.2" ry="0.7" fill="#4a4a4a" fill-opacity="0.50"/>
<ellipse cx="133.4" cy="70.3" rx="2.8" ry="1.0" fill="#858585" fill-opacity="0.40"/>
<ellipse cx="78.5" cy="64.6" rx="2.2" ry="0.7" fill="#4a4a4a" fill-opacity="0.50"/>
<ellipse cx="6.3" cy="134.4" rx="6.6" ry="2.3" fill="#858585" fill-opacity="0.40"/>
<ellipse cx="26.3" cy="135.8" rx="6.6" ry="2.3" fill="#858585" fill-opacity="0.40"/>
<ellipse cx="45.2" cy="63.5" rx="2.2" ry="0.8" fill="#4a4a4a" fill-opacity="0.50"/>
<ellipse cx="56.4" cy="86.4" rx="3.5" ry="1.2" fill="#4a4a4a" fill-opacity="0.50"/>
<ellipse cx="193.2" cy="63.3" rx="2.2" ry="0.8" fill="#858585" fill-opacity="0.40"/>
<ellipse cx="47.6" cy="74.8" rx="2.9" ry="1.0" fill="#4a4a4a" fill-opacity="0.50"/>
<ellipse cx="180.8" cy="91.7" rx="3.7" ry="1.3" fill="#4a4a4a" fill-opacity="0.50"/>
<ellipse cx="117.7" cy="135.3" rx="4.5" ry="1.6" fill="#4a4a4a" fill-opacity="0.50"/>
<ellipse cx="9.5" cy="106.7" rx="4.4" ry="1.5" fill="#858585" fill-opacity="0.40"/>
<ellipse cx="113.8" cy="125.0" rx="7.7" ry="2.6" fill="#4a4a4a" fill-opacity="0.50"/>
<ellipse cx="163.2" cy="86.4" rx="3.4" ry="1.2" fill="#858585" fill-opacity="0.40"/>
<ellipse cx="66.1" cy="73.9" rx="2.5" ry="0.9" fill="#4a4a4a" fill-opacity="0.50"/>
<ellipse cx="37.9" cy="70.6" rx="2.4" ry="0.8" fill="#4a4a4a" fill-opacity="0.50"/>
<ellipse cx="85.6" cy="80.3" rx="3.9" ry="1.3" fill="#858585" fill-opacity="0.40"/>
<ellipse cx="38.1" cy="124.8" rx="5.6" ry="1.9" fill="#4a4a4a" fill-opacity="0.50"/>
<ellipse cx="69.1" cy="110.2" rx="4.4" ry="1.5" fill="#4a4a4a" fill-opacity="0.50"/>
<ellipse cx="49.4" cy="71.7" rx="2.6" ry="0.9" fill="#858585" fill-opacity="0.40"/>
<ellipse cx="50.6" cy="112.2" rx="4.8" ry="1.6" fill="#4a4a4a" fill-opacity="0.50"/>
<ellipse cx="68.5" cy="131.3" rx="7.7" ry="2.6" fill="#858585" fill-opacity="0.40"/>
<ellipse cx="2.0" cy="128.7" rx="5.5" ry="1.9" fill="#4a4a4a" fill-opacity="0.50"/>
<ellipse cx="170.9" cy="65.8" rx="2.2" ry="0.8" fill="#858585" fill-opacity="0.40"/>
<ellipse cx="8.8" cy="96.2" rx="4.0" ry="1.4" fill="#4a4a4a" fill-opacity="0.50"/>
<ellipse cx="27.6" cy="63.6" rx="2.2" ry="0.7" fill="#4a4a4a" fill-opacity="0.50"/>
<ellipse cx="81.1" cy="80.6" rx="3.3" ry="1.1" fill="#4a4a4a" fill-opacity="0.50"/>
<ellipse cx="49.0" cy="111.4" rx="6.0" ry="2.0" fill="#858585" fill-opacity="0.40"/>
<ellipse cx="38.1" cy="69.5" rx="2.4" ry="0.8" fill="#858585" fill-opacity="0.40"/>
<ellipse cx="73.8" cy="87.4" rx="4.3" ry="1.5" fill="#4a4a4a" fill-opacity="0.50"/>
<ellipse cx="65.6" cy="79.1" rx="2.8" ry="1.0" fill="#4a4a4a" fill-opacity="0.50"/>
<ellipse cx="121.6" cy="62.9" rx="2.1" ry="0.7" fill="#858585" fill-opacity="0.40"/>
<ellipse cx="56.4" cy="134.8" rx="7.5" ry="2.6" fill="#858585" fill-opacity="0.40"/>
<ellipse cx="133.1" cy="73.9" rx="3.0" ry="1.0" fill="#858585" fill-opacity="0.40"/>
<ellipse cx="44.0" cy="125.3" rx="6.7" ry="2.3" fill="#4a4a4a" fill-opacity="0.50"/>
<ellipse cx="74.9" cy="89.1" rx="3.0" ry="1.0" fill="#4a4a4a" fill-opacity="0.50"/>
<ellipse cx="95.4" cy="81.7" rx="3.0" ry="1.0" fill="#4a4a4a" fill-opacity="0.50"/>
<ellipse cx="91.1" cy="87.2" rx="3.1" ry="1.1" fill="#858585" fill-opacity="0.40"/>
<ellipse cx="16.2" cy="75.5" rx="2.8" ry="0.9" fill="#4a4a4a" fill-opacity="0.50"/>
<ellipse cx="112.2" cy="69.7" rx="2.7" ry="0.9" fill="#4a4a4a" fill-opacity="0.50"/>
<ellipse cx="2.5" cy="110.9" rx="4.8" ry="1.7" fill="#4a4a4a" fill-opacity="0.50"/>
<ellipse cx="77.3" cy="64.7" rx="2.1" ry="0.7" fill="#4a4a4a" fill-opacity="0.50"/>
<ellipse cx="39.0" cy="203.2" rx="9.5" ry="5.2" fill="#4e4e4e" fill-opacity="0.55"/>
<ellipse cx="37.0" cy="200.0" rx="10.0" ry="7.0" fill="#7a7a7a"/>
<ellipse cx="148.4" cy="200.6" rx="11.4" ry="6.0" fill="#4e4e4e" fill-opacity="0.55"/>
<ellipse cx="146.0" cy="197.0" rx="12.0" ry="8.0" fill="#8a8a8a"/>
<ellipse cx="183.0" cy="198.5" rx="9.5" ry="7.5" fill="#4e4e4e" fill-opacity="0.55"/>
<ellipse cx="181.0" cy="194.0" rx="10.0" ry="10.0" fill="#a2a2a2"/>
<ellipse cx="122.0" cy="185.0" rx="6.0" ry="4.0" fill="#8a8a8a"/>
<ellipse cx="160.0" cy="182.0" rx="6.0" ry="4.0" fill="#8a8a8a"/>
<ellipse cx="60.0" cy="190.0" rx="5.0" ry="3.0" fill="#8a8a8a"/>
<ellipse cx="100.0" cy="150.0" rx="8.0" ry="4.0" fill="#5a5a5a"/>
<ellipse cx="130.0" cy="160.0" rx="7.0" ry="4.0" fill="#5e5e5e"/>
<ellipse cx="75.0" cy="140.0" rx="6.0" ry="3.0" fill="#5a5a5a"/>
<ellipse cx="76.0" cy="120.0" rx="9.0" ry="3.5" fill="#4e4e4e"/>
<ellipse cx="121.0" cy="133.0" rx="8.0" ry="3.5" fill="#505050"/>
<ellipse cx="141.0" cy="130.0" rx="7.0" ry="3.0" fill="#525252"/>
<ellipse cx="20.0" cy="215.0" rx="8.0" ry="4.0" fill="#888"/>
<ellipse cx="180.4" cy="250.6" rx="11.4" ry="6.0" fill="#4e4e4e" fill-opacity="0.55"/>
<ellipse cx="178.0" cy="247.0" rx="12.0" ry="8.0" fill="#a8a8a8"/>
<ellipse cx="182.6" cy="287.1" rx="12.3" ry="6.8" fill="#4e4e4e" fill-opacity="0.55"/>
<ellipse cx="180.0" cy="283.0" rx="13.0" ry="9.0" fill="#a4a4a4"/>
<ellipse cx="63.4" cy="241.8" rx="35.1" ry="11.2" fill="#4e4e4e" fill-opacity="0.55"/>
<ellipse cx="56.0" cy="235.0" rx="37.0" ry="15.0" fill="#a9a9a9"/>
<ellipse cx="116.8" cy="252.9" rx="18.1" ry="16.5" fill="#4e4e4e" fill-opacity="0.55"/>
<ellipse cx="113.0" cy="243.0" rx="19.0" ry="22.0" fill="#8c8c8c"/>
<ellipse cx="76.2" cy="279.2" rx="24.7" ry="12.0" fill="#4e4e4e" fill-opacity="0.55"/>
<ellipse cx="71.0" cy="272.0" rx="26.0" ry="16.0" fill="#909090"/>
<ellipse cx="21.0" cy="279.3" rx="19.0" ry="10.5" fill="#4e4e4e" fill-opacity="0.55"/>
<ellipse cx="17.0" cy="273.0" rx="20.0" ry="14.0" fill="#8e8e8e"/>
<ellipse cx="27.4" cy="304.3" rx="20.9" ry="10.5" fill="#4e4e4e" fill-opacity="0.55"/>
<ellipse cx="23.0" cy="298.0" rx="22.0" ry="14.0" fill="#939393"/>
<ellipse cx="71.4" cy="346.0" rx="30.4" ry="15.0" fill="#4e4e4e" fill-opacity="0.55"/>
<ellipse cx="65.0" cy="337.0" rx="32.0" ry="20.0" fill="#8f8f8f"/>
<ellipse cx="144.0" cy="341.6" rx="28.5" ry="12.8" fill="#4e4e4e" fill-opacity="0.55"/>
<ellipse cx="138.0" cy="334.0" rx="30.0" ry="17.0" fill="#9c9c9c"/>
<ellipse cx="183.0" cy="365.0" rx="14.0" ry="12.0" fill="#909090"/>
<ellipse cx="20.0" cy="350.0" rx="14.0" ry="8.0" fill="#8a8a8a"/>
<ellipse cx="110.0" cy="370.0" rx="20.0" ry="8.0" fill="#8a8a8a"/>
</g>
<defs><radialGradient id="crn" cx="192" cy="0" r="34" gradientUnits="userSpaceOnUse"><stop offset="0" stop-color="#fff" stop-opacity="0.5"/><stop offset="1" stop-color="#fff" stop-opacity="0"/></radialGradient></defs><rect x="150" y="0" width="42" height="40" fill="url(#crn)"/><g filter="url(#soft)"><rect x="0" y="56" width="192" height="5" fill="#7c7c7c" fill-opacity="0.5"/></g>
<rect x="0" y="0" width="9" height="60" fill="url(#lft)"/>
<defs><linearGradient id="lft2" x1="0" y1="60" x2="0" y2="200" gradientUnits="userSpaceOnUse"><stop offset="0" stop-color="#fff" stop-opacity="0.35"/><stop offset="1" stop-color="#fff" stop-opacity="0"/></linearGradient></defs>
<rect x="0" y="60" width="9" height="35" fill="url(#lft)" fill-opacity="0.40"/>
<rect x="0" y="95" width="9" height="35" fill="url(#lft)" fill-opacity="0.28"/>
<rect x="0" y="130" width="9" height="35" fill="url(#lft)" fill-opacity="0.17"/>
<rect x="0" y="165" width="9" height="35" fill="url(#lft)" fill-opacity="0.08"/>
<rect x="0" y="0" width="192" height="2" fill="#e4e4e4"/></svg>
</div>
<div class="a" style="left:289.5px;top:355px;width:45px;height:35px;background:#891e36;border-radius:4px"></div>
<div class="a" style="left:1184.5px;top:355px;width:44.2px;height:35px;background:#891e36;border-radius:4px"></div>
<svg class="a" style="left:280px;top:350px" width="960" height="45">
 <path d="M37,22.5 L26,22.5" stroke="#fff" stroke-width="2.8"/>
 <path d="M31,17 L25.5,22.5 L31,28" fill="none" stroke="#fff" stroke-width="2.8"/>
 <path d="M919,22.5 L930,22.5" stroke="#fff" stroke-width="2.8"/>
 <path d="M925,17 L930.5,22.5 L925,28" fill="none" stroke="#fff" stroke-width="2.8"/>
</svg>
<div class="sep" style="top:240px"></div>
<div class="sep" style="top:275px"></div>
<div class="sep" style="top:310px"></div>
<div class="sep" style="top:345px"></div>
<div class="sep" style="top:380px"></div>
<div class="sep" style="top:415px"></div>
<div class="sep" style="top:450px"></div>
<div class="sep" style="top:485px"></div>
<div class="a" style="left:1161px;top:206px;width:2px;height:288px;background:#9a9a9a"></div>
<div class="a" style="left:774.5px;top:539.5px;width:35px;height:24.5px;background:#891e36;border-radius:4px 4px 0 0"></div>
<svg class="a" style="left:774px;top:540px" width="200" height="24">
 <rect x="16.8" y="10.5" width="3.1" height="6" fill="#fff"/>
 <rect x="11.6" y="18" width="13.6" height="5" rx="1" fill="#fff"/>
 <path d="M13,15.3 L23.6,15.3 L18.3,21 Z" fill="#fff" stroke="#891e36" stroke-width="1.1" stroke-linejoin="round"/>
 <path d="M14,15.7 L22.6,15.7 L18.3,20 Z" fill="#fff"/>
 <g id="stars" fill="#ececec"><polygon points="79.80,4.50 82.21,10.08 88.26,10.65 83.70,14.67 85.03,20.60 79.80,17.50 74.57,20.60 75.90,14.67 71.34,10.65 77.39,10.08"/>
<polygon points="97.55,4.50 99.96,10.08 106.01,10.65 101.45,14.67 102.78,20.60 97.55,17.50 92.32,20.60 93.65,14.67 89.09,10.65 95.14,10.08"/>
<polygon points="115.30,4.50 117.71,10.08 123.76,10.65 119.20,14.67 120.53,20.60 115.30,17.50 110.07,20.60 111.40,14.67 106.84,10.65 112.89,10.08"/>
<polygon points="133.05,4.50 135.46,10.08 141.51,10.65 136.95,14.67 138.28,20.60 133.05,17.50 127.82,20.60 129.15,14.67 124.59,10.65 130.64,10.08"/>
<polygon points="150.80,4.50 153.21,10.08 159.26,10.65 154.70,14.67 156.03,20.60 150.80,17.50 145.57,20.60 146.90,14.67 142.34,10.65 148.39,10.08"/></g>
</svg>

<!-- pagination -->
<div class="a" style="left:378.5px;top:572.5px;width:63.5px;height:26.5px;background:#fff;border:1px solid #d6d6d6;border-radius:4px"></div>
<div class="a" style="left:927.5px;top:572px;width:83.5px;height:27.5px;background:linear-gradient(#fafafa,#ececec);border:1px solid #d0d0d0;border-radius:4px"></div>
<svg class="a" style="left:980px;top:578px" width="30" height="20">
 <path d="M9,6 L14,11 L19,6" fill="none" stroke="#888" stroke-width="2.6"/>
</svg>

<!-- footer -->
<div class="a" style="left:0;top:609px;width:1280px;height:34px;background:#891f36"></div>
<div class="a" style="left:0;top:643px;width:1280px;height:32px;background:linear-gradient(#ffffff 0%,#f2f2f2 35%,#d0d0d0 100%)"></div>

<div class="t n" id="t0" style="left:14.00px;top:10.66px;font-size:33.30px;font-weight:normal;font-style:normal;color:#ece6e8;transform:scaleX(0.9123);transform-origin:0 0;-webkit-text-stroke:0.7px #ece6e8;">planetary</div>
<div class="t n" id="t1" style="left:151.50px;top:10.66px;font-size:33.30px;font-weight:normal;font-style:normal;color:#ece6e8;transform:scaleX(0.8283);transform-origin:0 0;-webkit-text-stroke:0.7px #ece6e8;">science</div>
<div class="t n" id="t2" style="left:259.00px;top:10.66px;font-size:33.30px;font-weight:normal;font-style:normal;color:#ece6e8;transform:scaleX(0.8614);transform-origin:0 0;-webkit-text-stroke:0.7px #ece6e8;">archive</div>
<div class="t" id="t3" style="left:13.75px;top:53.34px;font-size:13.00px;font-weight:bold;font-style:italic;color:#f0eaec;transform:scaleX(0.8559);transform-origin:0 0;">PSA 5.5.1</div>
<div class="t" id="t4" style="left:1194.20px;top:-3.24px;font-size:42.00px;font-weight:bold;font-style:normal;color:#ffffff;transform:scaleX(0.9296);transform-origin:0 0;">esa</div>
<div class="t" id="t5" style="right:13.05px;top:95.00px;font-size:15.00px;font-weight:bold;font-style:normal;color:#4a4a4a;transform:scaleX(0.9746);transform-origin:100% 0;">IMAGE VIEW</div>
<div class="t n" id="t6" style="left:51.30px;top:133.32px;font-size:14.00px;font-weight:normal;font-style:normal;color:#1c74d8;transform:scaleX(0.8268);transform-origin:0 0;">Expand All</div>
<div class="t n" id="t7" style="left:161.60px;top:133.32px;font-size:14.00px;font-weight:normal;font-style:normal;color:#1c74d8;transform:scaleX(0.8161);transform-origin:0 0;">Collapse All</div>
<div class="t n" id="t8" style="left:28.00px;top:168.38px;font-size:12.20px;font-weight:normal;font-style:normal;color:#333;transform:scaleX(0.7920);transform-origin:0 0;">MISSIONS</div>
<div class="t" id="t9" style="left:58.70px;top:194.88px;font-size:13.50px;font-weight:bold;font-style:normal;color:#2a2a2a;transform:scaleX(0.8152);transform-origin:0 0;">Huygens</div>
<div class="t n" id="t10" style="left:58.70px;top:218.88px;font-size:13.50px;font-weight:normal;font-style:italic;color:#9a9a9a;transform:scaleX(0.8671);transform-origin:0 0;">ExoMars 2016</div>
<div class="t n" id="t11" style="left:58.70px;top:242.88px;font-size:13.50px;font-weight:normal;font-style:italic;color:#9a9a9a;transform:scaleX(0.8653);transform-origin:0 0;">Giotto</div>
<div class="t n" id="t12" style="left:58.70px;top:266.88px;font-size:13.50px;font-weight:normal;font-style:italic;color:#9a9a9a;transform:scaleX(0.8562);transform-origin:0 0;">Ground Based</div>
<div class="t n" id="t13" style="left:58.70px;top:290.88px;font-size:13.50px;font-weight:normal;font-style:italic;color:#9a9a9a;transform:scaleX(0.8553);transform-origin:0 0;">Hubble</div>
<div class="t n" id="t14" style="left:28.00px;top:317.88px;font-size:12.20px;font-weight:normal;font-style:normal;color:#333;transform:scaleX(0.6987);transform-origin:0 0;">TARGETS</div>
<div class="t" id="t15" style="left:58.70px;top:344.38px;font-size:13.50px;font-weight:bold;font-style:normal;color:#2a2a2a;transform:scaleX(0.8530);transform-origin:0 0;">Titan</div>
<div class="t n" id="t16" style="left:58.70px;top:368.38px;font-size:13.50px;font-weight:normal;font-style:italic;color:#9a9a9a;transform:scaleX(0.8766);transform-origin:0 0;">1P/Halley</div>
<div class="t n" id="t17" style="left:58.82px;top:392.38px;font-size:13.50px;font-weight:normal;font-style:italic;color:#9a9a9a;transform:scaleX(0.9012);transform-origin:0 0;">21 Lutetia</div>
<div class="t n" id="t18" style="left:58.82px;top:416.38px;font-size:13.50px;font-weight:normal;font-style:italic;color:#9a9a9a;transform:scaleX(0.8807);transform-origin:0 0;">2867 Steins</div>
<div class="t n" id="t19" style="left:58.70px;top:440.38px;font-size:13.50px;font-weight:normal;font-style:italic;color:#9a9a9a;transform:scaleX(0.8677);transform-origin:0 0;">4 Vesta</div>
<div class="t n" id="t20" style="left:28.00px;top:467.58px;font-size:12.20px;font-weight:normal;font-style:normal;color:#333;transform:scaleX(0.7602);transform-origin:0 0;">INSTRUMENTS</div>
<div class="t" id="t21" style="left:58.70px;top:494.08px;font-size:13.50px;font-weight:bold;font-style:normal;color:#2a2a2a;transform:scaleX(0.8551);transform-origin:0 0;">DISR</div>
<div class="t n" id="t22" style="left:58.70px;top:518.08px;font-size:13.50px;font-weight:normal;font-style:italic;color:#9a9a9a;transform:scaleX(0.8869);transform-origin:0 0;">300</div>
<div class="t n" id="t23" style="left:37.10px;top:537.50px;font-size:12.50px;font-weight:normal;font-style:normal;color:#333;transform:scaleX(0.8399);transform-origin:0 0;">With browse images only</div>
<div class="t n" id="t24" style="left:280.30px;top:148.80px;font-size:13.80px;font-weight:normal;font-style:normal;color:#333;transform:scaleX(0.8630);transform-origin:0 0;">Number of selected products:</div>
<div class="t" id="t25" style="left:448.00px;top:147.11px;font-size:16.40px;font-weight:bold;font-style:normal;color:#333;transform:scaleX(0.7797);transform-origin:0 0;">0</div>
<div class="t n" id="t26" style="left:570.30px;top:144.18px;font-size:16.00px;font-weight:normal;font-style:normal;color:#444;transform:scaleX(0.8417);transform-origin:0 0;">Sort by:</div>
<div class="t" id="t27" style="left:636.80px;top:143.00px;font-size:15.00px;font-weight:bold;font-style:normal;color:#fff;transform:scaleX(0.7176);transform-origin:0 0;">Mission</div>
<div class="t" id="t28" style="left:717.20px;top:143.00px;font-size:15.00px;font-weight:bold;font-style:normal;color:#fff;transform:scaleX(0.7494);transform-origin:0 0;">Target</div>
<div class="t" id="t29" style="left:809.50px;top:143.00px;font-size:15.00px;font-weight:bold;font-style:normal;color:#fff;transform:scaleX(0.7372);transform-origin:0 0;">Product Title</div>
<div class="t" id="t30" style="left:917.80px;top:143.00px;font-size:15.00px;font-weight:bold;font-style:normal;color:#fff;transform:scaleX(0.7002);transform-origin:0 0;">Processing Level</div>
<div class="t" id="t31" style="left:1044.60px;top:143.00px;font-size:15.00px;font-weight:bold;font-style:normal;color:#fff;transform:scaleX(0.7583);transform-origin:0 0;">Start Time</div>
<div class="t" id="t32" style="left:1141.00px;top:143.00px;font-size:15.00px;font-weight:bold;font-style:normal;color:#fff;transform:scaleX(0.7821);transform-origin:0 0;">Instrument</div>
<div class="t" id="t33" style="left:770.20px;top:215.38px;font-size:14.80px;font-weight:bold;font-style:normal;color:#f4f4f4;transform:scaleX(0.8056);transform-origin:0 0;">Product Identifier</div>
<div class="t n" id="t34" style="left:901.90px;top:215.38px;font-size:14.80px;font-weight:normal;font-style:normal;color:#f0f0f0;transform:scaleX(0.8068);transform-origin:0 0;">V_00883I_MMX_02_52_45_4465_DIS</div>
<div class="t" id="t35" style="left:770.20px;top:250.38px;font-size:14.80px;font-weight:bold;font-style:normal;color:#f4f4f4;transform:scaleX(0.8261);transform-origin:0 0;">Dataset Identifier</div>
<div class="t n" id="t36" style="left:901.90px;top:250.38px;font-size:14.80px;font-weight:normal;font-style:normal;color:#f0f0f0;transform:scaleX(0.7581);transform-origin:0 0;">HP-SSA-DISR-2/3-EDR/RDR-V1.0</div>
<div class="t" id="t37" style="left:770.20px;top:285.38px;font-size:14.80px;font-weight:bold;font-style:normal;color:#f4f4f4;transform:scaleX(0.8118);transform-origin:0 0;">Start Time</div>
<div class="t n" id="t38" style="left:901.90px;top:285.38px;font-size:14.80px;font-weight:normal;font-style:normal;color:#f0f0f0;transform:scaleX(0.8172);transform-origin:0 0;">2005-01-14 12:03:06.446</div>
<div class="t" id="t39" style="left:770.20px;top:320.38px;font-size:14.80px;font-weight:bold;font-style:normal;color:#f4f4f4;transform:scaleX(0.7887);transform-origin:0 0;">Stop Time</div>
<div class="t n" id="t40" style="left:901.90px;top:320.38px;font-size:14.80px;font-weight:normal;font-style:normal;color:#f0f0f0;transform:scaleX(0.8172);transform-origin:0 0;">2005-01-14 12:03:06.460</div>
<div class="t" id="t41" style="left:770.20px;top:355.38px;font-size:14.80px;font-weight:bold;font-style:normal;color:#f4f4f4;transform:scaleX(0.7892);transform-origin:0 0;">Target</div>
<div class="t n" id="t42" style="left:901.90px;top:355.38px;font-size:14.80px;font-weight:normal;font-style:normal;color:#f0f0f0;transform:scaleX(0.8348);transform-origin:0 0;">Titan</div>
<div class="t" id="t43" style="left:770.20px;top:390.38px;font-size:14.80px;font-weight:bold;font-style:normal;color:#f4f4f4;transform:scaleX(0.7673);transform-origin:0 0;">Mission</div>
<div class="t n" id="t44" style="left:901.90px;top:390.38px;font-size:14.80px;font-weight:normal;font-style:normal;color:#f0f0f0;transform:scaleX(0.7708);transform-origin:0 0;">Huygens</div>
<div class="t" id="t45" style="left:770.20px;top:425.38px;font-size:14.80px;font-weight:bold;font-style:normal;color:#f4f4f4;transform:scaleX(0.8373);transform-origin:0 0;">Instrument</div>
<div class="t n" id="t46" style="left:901.90px;top:425.38px;font-size:14.80px;font-weight:normal;font-style:normal;color:#f0f0f0;transform:scaleX(0.7633);transform-origin:0 0;">DISR</div>
<div class="t" id="t47" style="left:770.20px;top:460.38px;font-size:14.80px;font-weight:bold;font-style:normal;color:#f4f4f4;transform:scaleX(0.7542);transform-origin:0 0;">Processing Level</div>
<div class="t n" id="t48" style="left:901.90px;top:460.38px;font-size:14.80px;font-weight:normal;font-style:normal;color:#f0f0f0;transform:scaleX(0.8047);transform-origin:0 0;">Not Available</div>
<div class="t" id="t49" style="left:769.40px;top:505.28px;font-size:14.80px;font-weight:bold;font-style:normal;color:#2a86e6;transform:scaleX(0.7863);transform-origin:0 0;">See Label File</div>
<div class="t" id="t50" style="left:947.50px;top:545.96px;font-size:14.50px;font-weight:bold;font-style:normal;color:#f4f4f4;transform:scaleX(0.9618);transform-origin:0 0;">0/5</div>
<div class="t" id="t51" style="left:276.30px;top:579.44px;font-size:13.00px;font-weight:bold;font-style:normal;color:#1c74d8;transform:scaleX(0.8479);transform-origin:0 0;">&lt;&lt;</div>
<div class="t" id="t52" style="left:311.60px;top:579.44px;font-size:13.00px;font-weight:bold;font-style:normal;color:#1c74d8;transform:scaleX(0.7888);transform-origin:0 0;">&lt;</div>
<div class="t n" id="t53" style="left:334.30px;top:579.20px;font-size:13.80px;font-weight:normal;font-style:normal;color:#333;transform:scaleX(0.7759);transform-origin:0 0;">Page:</div>
<div class="t n" id="t54" style="left:386.70px;top:579.20px;font-size:13.80px;font-weight:normal;font-style:normal;color:#333;transform:scaleX(0.9777);transform-origin:0 0;">2</div>
<div class="t n" id="t55" style="left:455.30px;top:579.20px;font-size:13.80px;font-weight:normal;font-style:normal;color:#333;transform:scaleX(0.8734);transform-origin:0 0;">2</div>
<div class="t" id="t56" style="left:478.75px;top:579.44px;font-size:13.00px;font-weight:bold;font-style:normal;color:#78aee8;transform:scaleX(0.8676);transform-origin:0 0;">&gt;</div>
<div class="t" id="t57" style="left:506.90px;top:579.44px;font-size:13.00px;font-weight:bold;font-style:normal;color:#78aee8;transform:scaleX(0.8939);transform-origin:0 0;">&gt;&gt;</div>
<div class="t n" id="t58" style="left:850.20px;top:579.20px;font-size:13.80px;font-weight:normal;font-style:normal;color:#333;transform:scaleX(0.9072);transform-origin:0 0;">Items/page:</div>
<div class="t n" id="t59" style="left:936.70px;top:579.20px;font-size:13.80px;font-weight:normal;font-style:normal;color:#333;transform:scaleX(0.8662);transform-origin:0 0;">5000</div>
<div class="t n" id="t60" style="right:13.03px;top:579.20px;font-size:13.80px;font-weight:normal;font-style:normal;color:#333;transform:scaleX(0.8787);transform-origin:100% 0;">Displaying 5001 - 5698 (145 images) of 5698</div>
<div class="t" id="t61" style="right:13.03px;top:651.84px;font-size:14.20px;font-weight:bold;font-style:normal;color:#3a6f9e;transform:scaleX(0.8184);transform-origin:100% 0;">COPYRIGHT 2004 - 2018 © EUROPEAN SPACE AGENCY. ALL RIGHTS RESERVED.</div>
</body></html>
